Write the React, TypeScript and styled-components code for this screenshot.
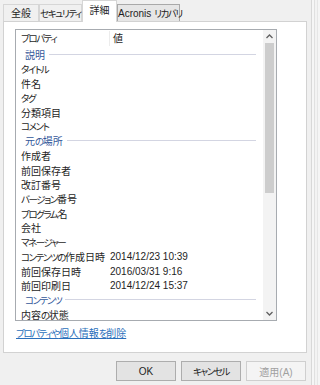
import React from 'react';
import styled, { createGlobalStyle } from 'styled-components';

const GlobalStyle = createGlobalStyle`
  html, body {
    margin: 0;
    padding: 0;
    background: #f0f0f0;
  }
  body {
    font-family: 'Liberation Sans', 'Noto Sans CJK JP', sans-serif;
    font-size: 10px;
    color: #1e1e1e;
  }
`;

// Meiryo UI draws kana much narrower than kanji; mimic that per run
const Kana = styled.span`
  font-size: 9.5px;
  letter-spacing: -1.4px;
  font-feature-settings: 'palt';
`;

const jp = (text: string) =>
  text.split(/([\u3040-\u30ff]+)/).map((part, i) =>
    /^[\u3040-\u30ff]+$/.test(part) ? <Kana key={i}>{part}</Kana> : part
  );

const Window = styled.div`
  display: flex;
  width: 320px;
  height: 385px;
  overflow: hidden;
  background: #f0f0f0;
`;

const Main = styled.div`
  flex: 1;
  display: flex;
  flex-direction: column;
  padding-left: 3px;
`;

const FrameEdge = styled.div`
  width: 9px;
  background: linear-gradient(
    to right,
    #d8d8d8 0 1px,
    #f6f6f6 1px 3px,
    #e0e0e0 3px 4px,
    #f3f3f3 4px 6px,
    #e6e6e6 6px 7px,
    #f5f5f5 7px
  );
`;

const TabStrip = styled.div`
  display: flex;
  align-items: flex-end;
  height: 21px;
`;

const Tab = styled.div<{ $active?: boolean; $hover?: boolean; $w: number }>`
  position: relative;
  z-index: ${(p) => (p.$active ? 1 : 0)};
  box-sizing: border-box;
  width: ${(p) => p.$w}px;
  height: ${(p) => (p.$active ? 22 : 17)}px;
  margin-bottom: ${(p) => (p.$active ? -1 : 0)}px;
  padding-top: ${(p) => (p.$active ? 4 : 3)}px;
  border: 1px solid ${(p) => (p.$hover ? '#a9a9a9' : '#d6d6d6')};
  border-bottom: none;
  background: ${(p) => (p.$active ? '#fff' : p.$hover ? '#e6e6e6' : '#f0f0f0')};
  text-align: center;
  line-height: 12px;
  white-space: nowrap;
`;

const Panel = styled.div`
  box-sizing: border-box;
  width: 304px;
  height: 332px;
  background: #fff;
  border: 1px solid #d2d2d2;
  padding: 7px 0 0 11px;
  display: flex;
  flex-direction: column;
`;

const ListBox = styled.div`
  box-sizing: border-box;
  width: 262px;
  height: 292px;
  border: 1px solid #a7abb0;
  display: flex;
  background: #fff;
`;

const ListRows = styled.div`
  flex: 1;
  display: flex;
  flex-direction: column;
  overflow: hidden;
`;

const Header = styled.div`
  flex: none;
  display: grid;
  grid-template-columns: 94px 1fr;
  align-items: center;
  height: 17px;
`;

const HeaderCell = styled.div<{ $first?: boolean }>`
  padding-left: ${(p) => (p.$first ? 5 : 3)}px;
  line-height: 15px;
  border-right: ${(p) => (p.$first ? '1px solid #ececec' : 'none')};
`;

const Row = styled.div`
  flex: none;
  display: grid;
  grid-template-columns: 94px 1fr;
  align-items: center;
  height: 14.44px;
  white-space: nowrap;
`;

const Name = styled.div`
  padding-left: 5px;
`;

const GroupRow = styled.div`
  flex: none;
  display: flex;
  align-items: center;
  height: 14.44px;
  padding: 0 7px 0 9px;
  color: #33579a;
  white-space: nowrap;
`;

const GroupLine = styled.div`
  flex: 1;
  height: 1px;
  margin-left: 4px;
  background: #d3d5e2;
`;

const ScrollBar = styled.div`
  flex: none;
  width: 13px;
  display: flex;
  flex-direction: column;
  background: #f3f3f3;
`;

const ArrowBtn = styled.div`
  height: 13px;
  display: flex;
  align-items: center;
  justify-content: center;
`;

const Thumb = styled.div`
  height: 150px;
  margin: 0 2px;
  background: #cdcdcd;
`;

const Track = styled.div`
  flex: 1;
`;

const Link = styled.a`
  margin: 7px 0 0 1px;
  line-height: 12px;
  color: #2a6fbb;
  text-decoration: underline;
  cursor: pointer;
`;

const Footer = styled.div`
  display: flex;
  justify-content: flex-end;
  gap: 5px;
  padding: 8px 5px 0 0;
`;

const Button = styled.button<{ $disabled?: boolean }>`
  box-sizing: border-box;
  width: 60px;
  height: 20px;
  padding: 0;
  font: inherit;
  font-size: 10px;
  color: ${(p) => (p.$disabled ? '#a0a0a0' : '#1e1e1e')};
  background: ${(p) => (p.$disabled ? '#f4f4f4' : '#e3e3e3')};
  border: 1px solid ${(p) => (p.$disabled ? '#cfcfcf' : '#adadad')};
`;

const Chevron = ({ up }: { up?: boolean }) => (
  <svg width="7" height="5" viewBox="0 0 7 5">
    <path
      d={up ? 'M0.5 4 L3.5 1 L6.5 4' : 'M0.5 1 L3.5 4 L6.5 1'}
      fill="none"
      stroke="#606060"
      strokeWidth="1.3"
    />
  </svg>
);

type Item = { group?: string; name?: string; value?: string };

const items: Item[] = [
  { group: '説明' },
  { name: 'タイトル' },
  { name: '件名' },
  { name: 'タグ' },
  { name: '分類項目' },
  { name: 'コメント' },
  { group: '元の場所' },
  { name: '作成者' },
  { name: '前回保存者' },
  { name: '改訂番号' },
  { name: 'バージョン番号' },
  { name: 'プログラム名' },
  { name: '会社' },
  { name: 'マネージャー' },
  { name: 'コンテンツの作成日時', value: '2014/12/23 10:39' },
  { name: '前回保存日時', value: '2016/03/31 9:16' },
  { name: '前回印刷日', value: '2014/12/24 15:37' },
  { group: 'コンテンツ' },
  { name: '内容の状態' },
];

const tabs = [
  { label: '全般', w: 36 },
  { label: 'セキュリティ', w: 43 },
  { label: '詳細', w: 35, active: true },
  { label: 'Acronis リカバリ', w: 63, hover: true },
];

export default function App() {
  return (
    <>
      <GlobalStyle />
      <Window>
        <Main>
          <TabStrip>
            {tabs.map((t) => (
              <Tab key={t.label} $w={t.w} $active={t.active} $hover={t.hover}>
                {jp(t.label)}
              </Tab>
            ))}
          </TabStrip>
          <Panel>
            <ListBox>
              <ListRows>
                <Header>
                  <HeaderCell $first>{jp('プロパティ')}</HeaderCell>
                  <HeaderCell>値</HeaderCell>
                </Header>
                {items.map((it, i) =>
                  it.group ? (
                    <GroupRow key={i}>
                      {jp(it.group)}
                      <GroupLine />
                    </GroupRow>
                  ) : (
                    <Row key={i}>
                      <Name>{jp(it.name || '')}</Name>
                      <div>{it.value}</div>
                    </Row>
                  )
                )}
              </ListRows>
              <ScrollBar>
                <ArrowBtn>
                  <Chevron up />
                </ArrowBtn>
                <Thumb />
                <Track />
                <ArrowBtn>
                  <Chevron />
                </ArrowBtn>
              </ScrollBar>
            </ListBox>
            <Link>{jp('プロパティや個人情報を削除')}</Link>
          </Panel>
          <Footer>
            <Button>OK</Button>
            <Button>{jp('キャンセル')}</Button>
            <Button $disabled>適用(A)</Button>
          </Footer>
        </Main>
        <FrameEdge />
      </Window>
    </>
  );
}
